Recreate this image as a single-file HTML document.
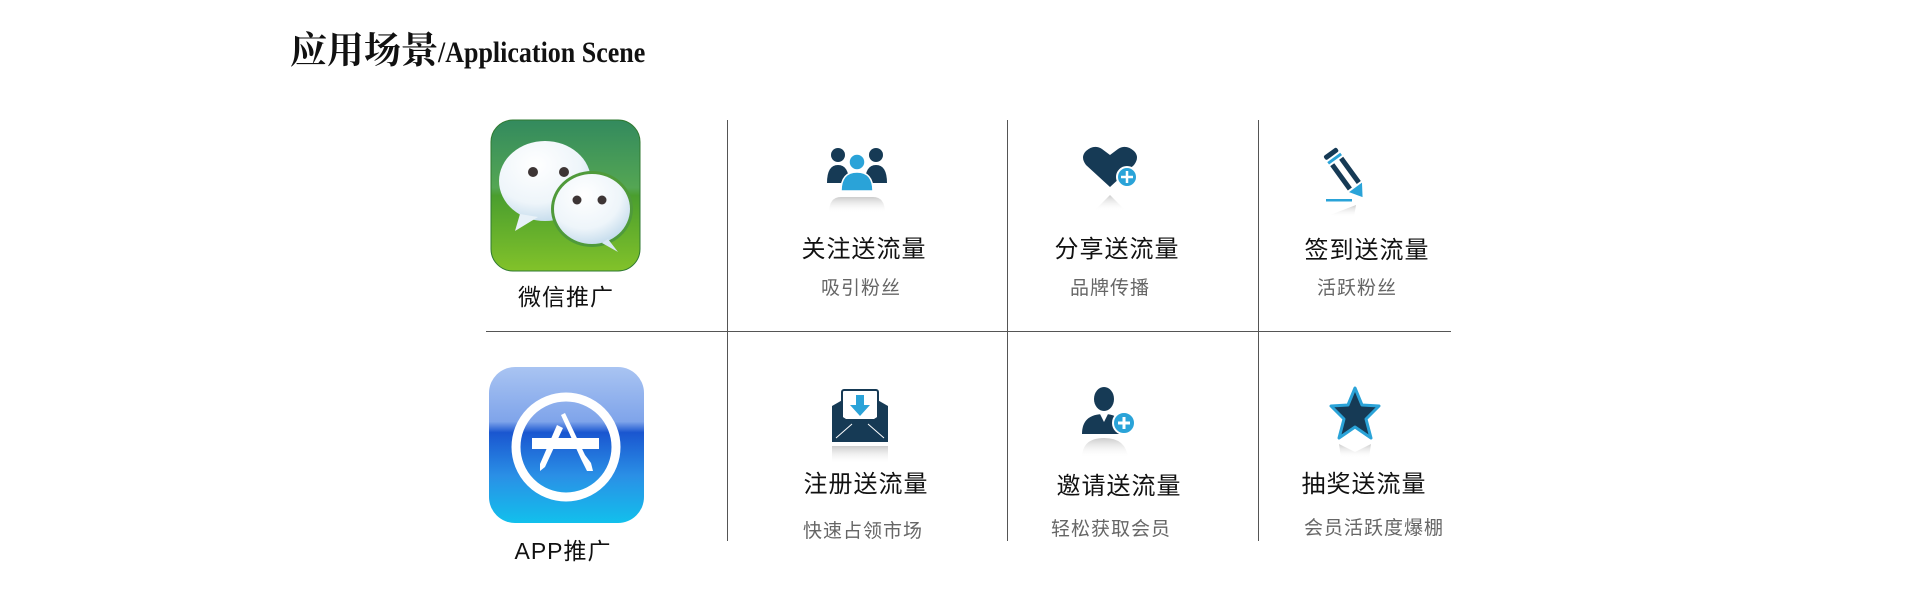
<!DOCTYPE html>
<html><head><meta charset="utf-8"><style>
body{margin:0;width:1920px;height:600px;background:#fff;position:relative;overflow:hidden;font-family:"Liberation Sans","Noto Sans CJK SC",sans-serif}
.a{position:absolute}
.t{position:absolute;transform:translateX(-50%);white-space:nowrap;color:#111;font-size:24px;letter-spacing:1px}
.s{position:absolute;transform:translateX(-50%);white-space:nowrap;color:#666;font-size:19px;letter-spacing:1px}
.vl{position:absolute;width:1px;background:#555;top:120px;height:421px}
.ic{position:absolute;transform:translateX(-50%)}
</style></head><body>
<div class="a" style="left:290px;top:20px;font-family:'Liberation Serif','Noto Serif CJK SC',serif;font-weight:bold;color:#111;white-space:nowrap"><span style="font-size:37px">应用场景</span><span style="font-size:26px;display:inline-block;transform:scaleY(1.12);transform-origin:bottom">/Application Scene</span></div>

<div class="vl" style="left:727px"></div>
<div class="vl" style="left:1007px"></div>
<div class="vl" style="left:1258px"></div>
<div class="a" style="left:486px;top:331px;width:965px;height:1px;background:#555"></div>

<svg class="a" style="left:490px;top:119px" width="151" height="153" viewBox="0 0 151 153">
<defs><linearGradient id="g1" x1="0" y1="0" x2="0" y2="1"><stop offset="0" stop-color="#338a5e"/><stop offset="0.45" stop-color="#54a653"/><stop offset="0.5" stop-color="#4a9e2e"/><stop offset="1" stop-color="#82c22a"/></linearGradient>
<radialGradient id="b1" cx="0.4" cy="0.3" r="0.8"><stop offset="0" stop-color="#fff"/><stop offset="0.6" stop-color="#eef5fa"/><stop offset="1" stop-color="#b8d4e8"/></radialGradient></defs>
<rect x="1" y="1" width="149" height="151" rx="22" fill="url(#g1)" stroke="#2f7a30"/>
<ellipse cx="55" cy="62" rx="46" ry="40" fill="url(#b1)"/>
<path d="M30 95 L25 112 L48 98 Z" fill="#e8f1f8"/>
<ellipse cx="102" cy="90" rx="41" ry="38" fill="#4f9a3a"/>
<ellipse cx="102" cy="90" rx="38" ry="35" fill="url(#b1)"/>
<path d="M118 120 L128 133 L112 124 Z" fill="#d8e8f3"/>
<circle cx="43" cy="53" r="5" fill="#3d3535"/><circle cx="74" cy="53" r="5" fill="#3d3535"/>
<circle cx="87" cy="81" r="4.5" fill="#3d3535"/><circle cx="112" cy="81" r="4.5" fill="#3d3535"/>
</svg>
<div class="t" style="left:566px;top:278px;font-size:23px">微信推广</div>

<svg class="a" style="left:489px;top:367px" width="155" height="156" viewBox="0 0 155 156">
<defs><linearGradient id="g2" x1="0" y1="0" x2="0" y2="1"><stop offset="0" stop-color="#a9c4f2"/><stop offset="0.35" stop-color="#7fa4ea"/><stop offset="0.42" stop-color="#1a56d0"/><stop offset="0.7" stop-color="#2a90e6"/><stop offset="1" stop-color="#12c0ec"/></linearGradient></defs>
<rect x="0" y="0" width="155" height="156" rx="26" fill="url(#g2)"/>
<circle cx="77" cy="80" r="50" fill="none" stroke="#fff" stroke-width="9"/>
<rect x="43" y="71" width="67" height="11" fill="#fff"/>
<path d="M68 58 L74 61 L56 100 L51 104 L51 97 Z" fill="#fff"/>
<path d="M72 48 L76 46 L96 88 L102 96 L104 104 L98 104 L92 92 Z" fill="#fff"/>
</svg>
<div class="t" style="left:563px;top:532px;font-size:23px">APP推广</div>

<svg class="ic" style="left:857px;top:145px" width="64" height="76" viewBox="0 0 64 76">
<defs><linearGradient id="f" x1="0" y1="0" x2="0" y2="1"><stop offset="0" stop-color="#999" stop-opacity=".5"/><stop offset="1" stop-color="#fff" stop-opacity="0"/></linearGradient></defs>
<circle cx="13" cy="10" r="7" fill="#163a55"/><circle cx="51" cy="10" r="7" fill="#163a55"/>
<path d="M2 38 Q2 20 13 20 Q24 20 24 38 Z M40 38 Q40 20 51 20 Q62 20 62 38 Z" fill="#163a55"/>
<circle cx="32" cy="17" r="8" fill="#2aa3d8" stroke="#fff" stroke-width="1.5"/>
<path d="M16 46 Q16 27 32 27 Q48 27 48 46 Z" fill="#2aa3d8" stroke="#fff" stroke-width="1.5"/>
<path d="M4 68 Q4 52 16 52 L48 52 Q60 52 60 68 Z" fill="url(#f)"/>
</svg>
<svg class="ic" style="left:1112px;top:145px" width="64" height="76" viewBox="0 0 64 76">
<path d="M30 42 L6 20 Q0 12 6 6 Q14 -1 22 4 L30 10 L38 4 Q46 -1 54 6 Q60 12 54 20 Z" fill="#163a55"/>
<circle cx="47" cy="32" r="10" fill="#2aa3d8" stroke="#fff" stroke-width="2"/>
<path d="M47 26 V38 M41 32 H53" stroke="#fff" stroke-width="2.5"/>
<path d="M14 66 L30 50 L46 66 Z" fill="url(#f)"/>
</svg>
<svg class="ic" style="left:1344px;top:145px" width="64" height="76" viewBox="0 0 64 76">
<g transform="translate(20 10) rotate(-36)">
<rect x="-8" y="-4" width="16" height="5" rx="2" fill="#163a55"/>
<rect x="-8" y="3" width="16" height="3" fill="#2aa3d8"/>
<rect x="-8" y="8" width="5" height="30" fill="#163a55"/>
<rect x="3" y="8" width="5" height="30" fill="#163a55"/>
<path d="M-8 40 L8 40 L0 52 Z" fill="#2aa3d8"/>
</g>
<rect x="14" y="54" width="26" height="2.5" fill="#2aa3d8"/>
<path d="M18 70 L44 60 L42 72 Z" fill="url(#f)"/>
</svg>

<div class="t" style="left:864px;top:229px">关注送流量</div>
<div class="t" style="left:1117px;top:229px">分享送流量</div>
<div class="t" style="left:1367px;top:230px">签到送流量</div>
<div class="s" style="left:861px;top:273px">吸引粉丝</div>
<div class="s" style="left:1110px;top:273px">品牌传播</div>
<div class="s" style="left:1357px;top:273px">活跃粉丝</div>

<svg class="ic" style="left:860px;top:388px" width="64" height="76" viewBox="0 0 64 76">
<path d="M4 18 L32 2 L60 18 L60 52 Q60 54 58 54 L6 54 Q4 54 4 52 Z" fill="#163a55"/>
<rect x="14" y="2" width="36" height="30" rx="2" fill="#fff" stroke="#163a55" stroke-width="2"/>
<path d="M28 7 H36 V17 H42 L32 28 L22 17 H28 Z" fill="#2aa3d8"/>
<path d="M4 22 L32 40 L60 22 L60 54 L4 54 Z" fill="#163a55"/>
<path d="M8 50 L24 36 M56 50 L40 36" stroke="#fff" stroke-width="1"/>
<path d="M4 58 L60 58 L60 76 L4 76 Z" fill="url(#f)"/>
</svg>
<svg class="ic" style="left:1110px;top:386px" width="64" height="76" viewBox="0 0 64 76">
<ellipse cx="26" cy="13" rx="10" ry="12" fill="#163a55"/>
<path d="M4 48 Q4 28 26 28 Q40 28 44 38 L44 48 Z" fill="#163a55"/>
<path d="M22 28 L26 36 L30 28 Z" fill="#fff"/>
<circle cx="46" cy="37" r="11" fill="#2aa3d8" stroke="#fff" stroke-width="2"/>
<path d="M46 31 V43 M40 37 H52" stroke="#fff" stroke-width="3"/>
<path d="M4 72 Q4 52 26 52 Q48 52 50 72 Z" fill="url(#f)"/>
</svg>
<svg class="ic" style="left:1355px;top:386px" width="64" height="76" viewBox="0 0 64 76">
<path d="M32 2 L39 19 L56 20 L43 33 L48 52 L32 41 L16 52 L21 33 L8 20 L25 19 Z" fill="#163a55" stroke="#2aa3d8" stroke-width="3" stroke-linejoin="round"/>
<path d="M16 58 L32 66 L48 58 L46 72 L18 72 Z" fill="url(#f)"/>
</svg>

<div class="t" style="left:866px;top:464px">注册送流量</div>
<div class="t" style="left:1119px;top:466px">邀请送流量</div>
<div class="t" style="left:1364px;top:464px">抽奖送流量</div>
<div class="s" style="left:863px;top:516px">快速占领市场</div>
<div class="s" style="left:1111px;top:514px">轻松获取会员</div>
<div class="s" style="left:1374px;top:513px">会员活跃度爆棚</div>
</body></html>
